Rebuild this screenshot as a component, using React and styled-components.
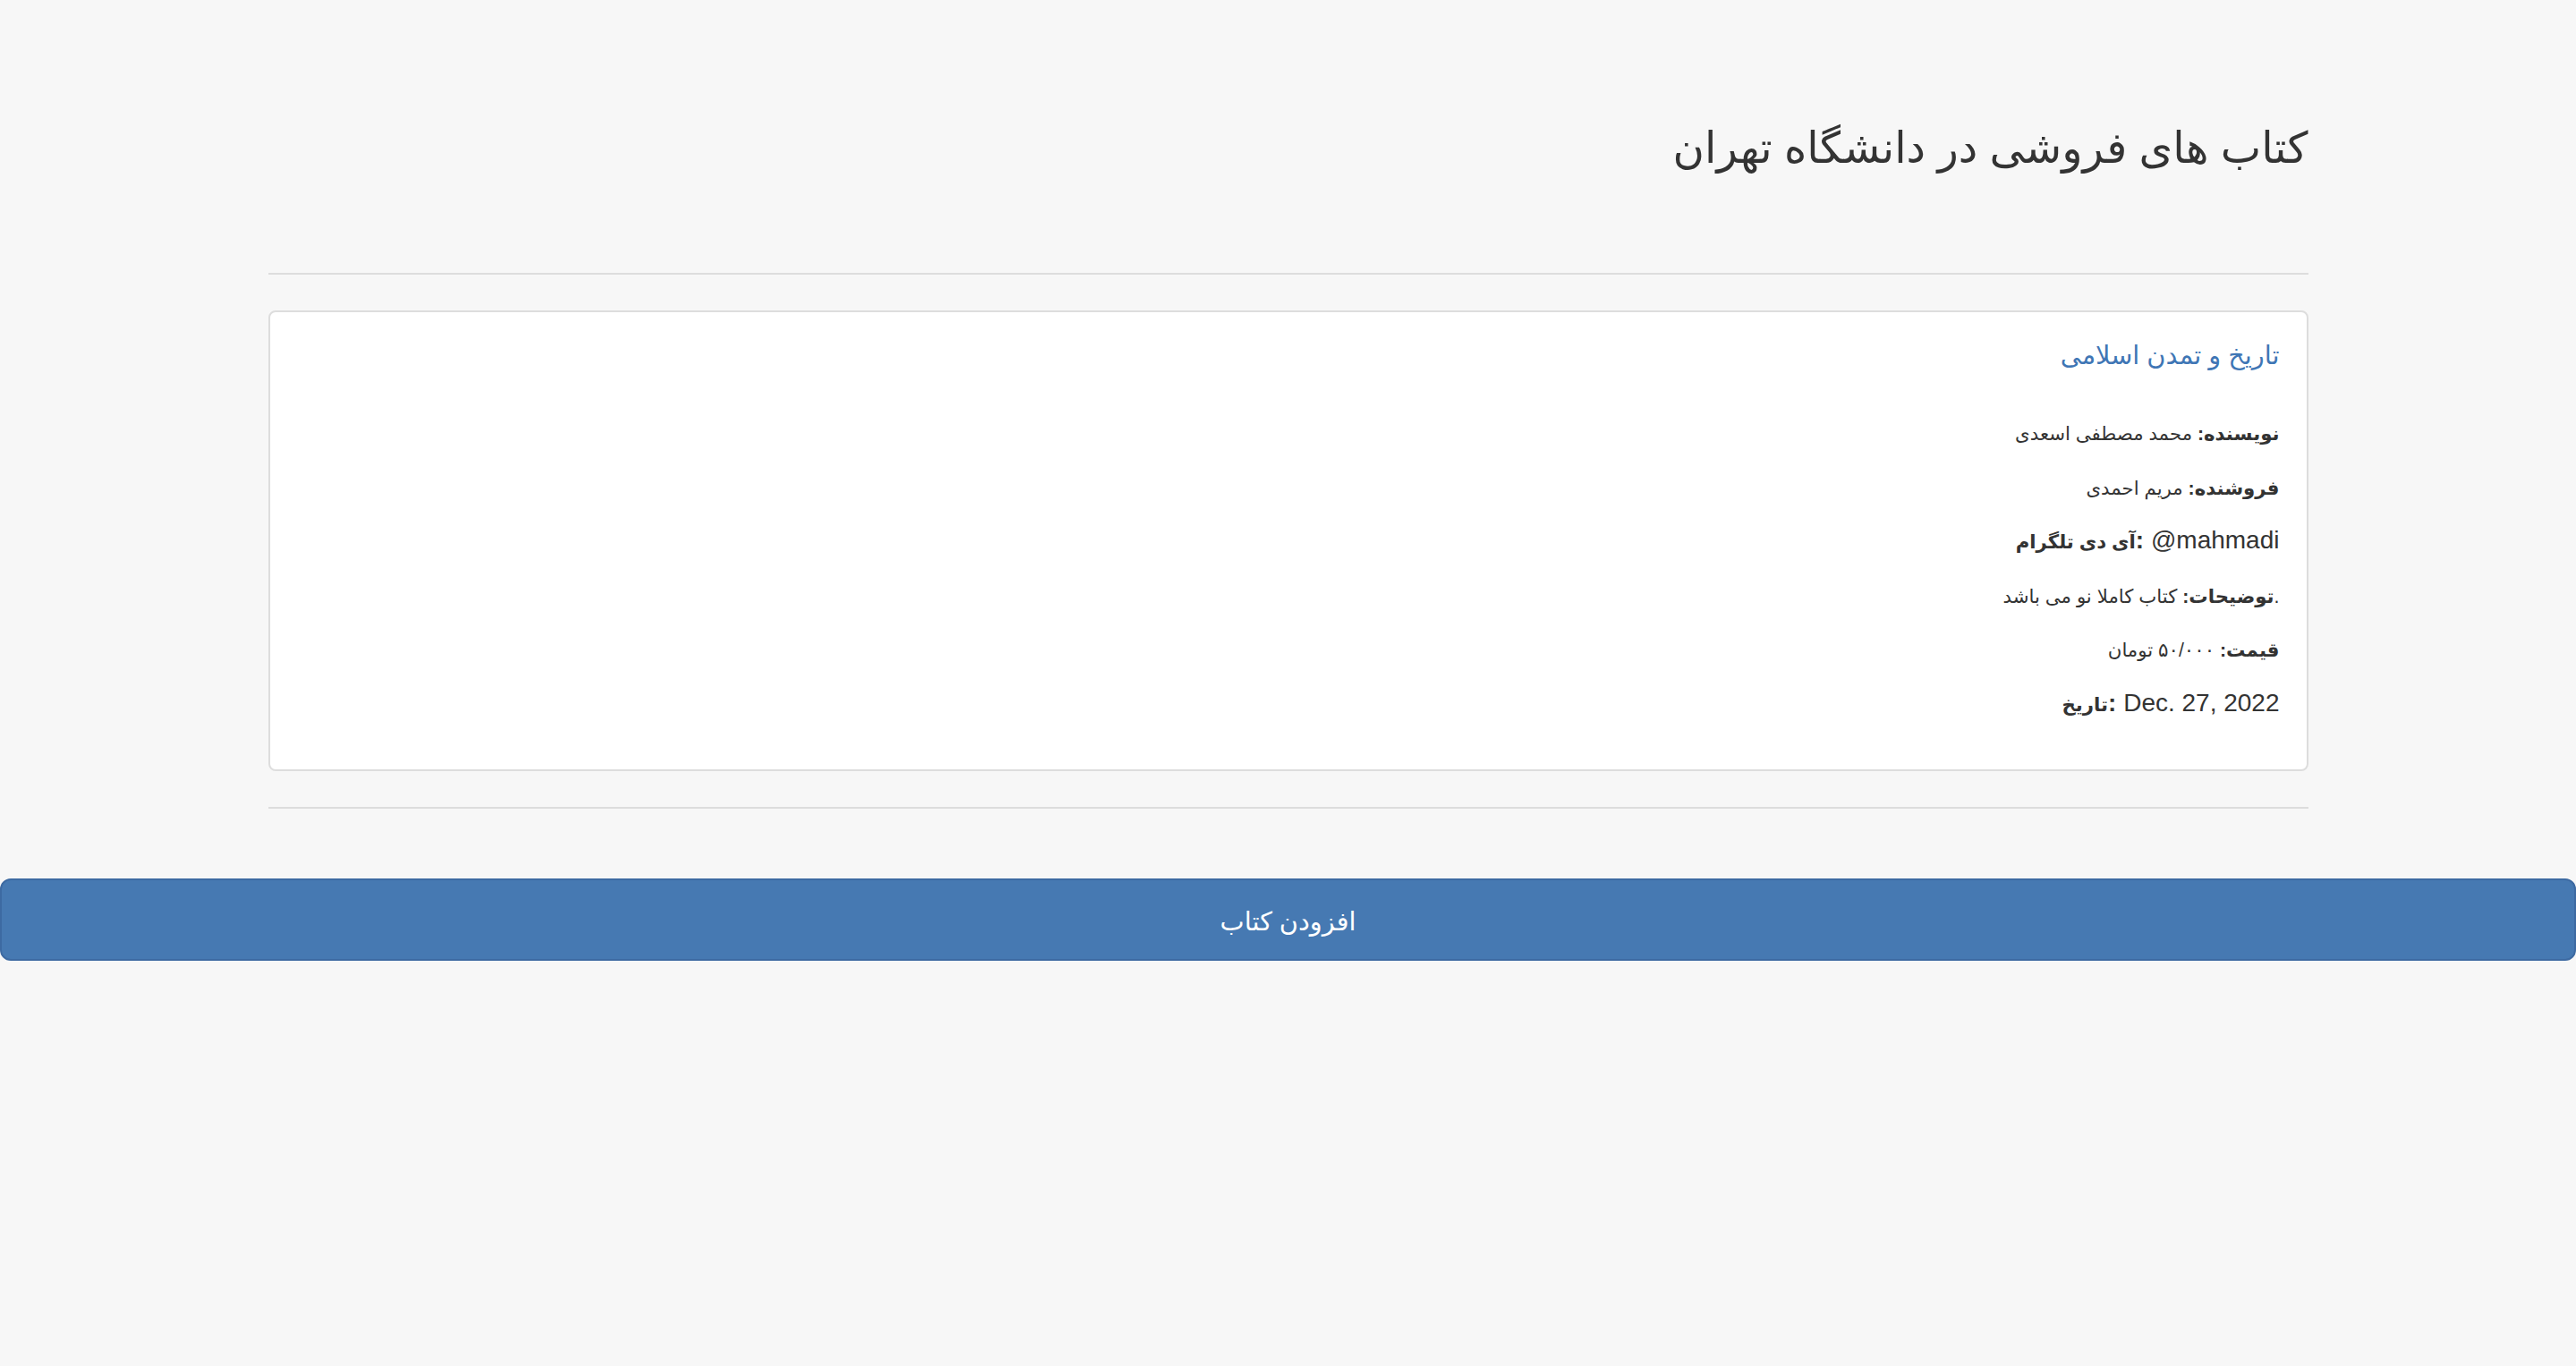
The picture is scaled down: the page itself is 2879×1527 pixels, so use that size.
import React from "react";
import styled, { createGlobalStyle } from "styled-components";

const GlobalStyle = createGlobalStyle`
  html, body {
    margin: 0;
    padding: 0;
    background-color: #f7f7f7;
  }
  body {
    font-family: "Liberation Sans", Arial, "DejaVu Sans", sans-serif;
    color: #333333;
    font-size: 28px;
    line-height: 1.42857;
  }
  * {
    box-sizing: border-box;
  }
`;

const Page = styled.div`
  width: 100%;
  padding-top: 118px;
  padding-bottom: 200px;
`;

const Container = styled.div`
  width: 2280px;
  margin: 0 auto;
`;

// Persian runs: the fallback Arabic face is larger than the original's,
// so they are set a little smaller than the surrounding Latin text
const Fa = styled.span`
  font-size: ${(p) => p.$scale || 0.76}em;
  line-height: 1;
`;

const Title = styled.h1`
  margin: 0 0 108px;
  font-size: 72px;
  font-weight: normal;
  line-height: 79px;
  text-align: right;
  color: #333333;
`;

const Rule = styled.hr`
  margin: 0 0 40px;
  border: 0;
  border-top: 2px solid #dddddd;
  height: 0;
`;

const Panel = styled.div`
  background-color: #ffffff;
  border: 2px solid #dddddd;
  border-radius: 8px;
  padding: 26px 30px 34px;
  margin-bottom: 40px;
  text-align: right;
`;

const BookTitle = styled.h4`
  margin: 0 0 48px;
  font-size: 36px;
  font-weight: normal;
  line-height: 40px;
  color: #3f76b5;
`;

const Row = styled.p`
  margin: 0 0 20px;
  font-size: 28px;
  line-height: 40.5px;
  direction: ltr;
  text-align: right;
`;

const Label = styled.b`
  font-weight: bold;
`;

const AddButton = styled.button`
  display: block;
  width: 100%;
  margin-top: 78px;
  padding: 20px 32px;
  font-family: "Liberation Sans", Arial, "DejaVu Sans", sans-serif;
  font-size: 36px;
  line-height: 48px;
  color: #ffffff;
  background-color: #4679b2;
  border: 2px solid #3d6aa2;
  border-radius: 12px;
  text-align: center;
  cursor: pointer;

  &:hover {
    background-color: #3d6ca3;
  }
`;

const book = {
  title: "تاریخ و تمدن اسلامی",
  author: "محمد مصطفی اسعدی",
  seller: "مریم احمدی",
  telegram: "@mahmadi",
  description: "کتاب کاملا نو می باشد.",
  price: "۵۰/۰۰۰ تومان",
  date: "Dec. 27, 2022",
};

const App = () => {
  return (
    <>
      <GlobalStyle />
      <Page>
        <Container>
          <Title>
            <Fa $scale={0.67}>کتاب های فروشی در دانشگاه تهران</Fa>
          </Title>
          <Rule />
          <Panel>
            <BookTitle>
              <Fa $scale={0.8}>{book.title}</Fa>
            </BookTitle>
            <Row>
              <Fa>
                <Label>نویسنده:</Label> {book.author}
              </Fa>
            </Row>
            <Row>
              <Fa>
                <Label>فروشنده:</Label> {book.seller}
              </Fa>
            </Row>
            <Row>
              <Label>
                <Fa>آی دی تلگرام</Fa>:
              </Label>{" "}
              {book.telegram}
            </Row>
            <Row>
              <Fa>
                <Label>توضیحات:</Label> {book.description}
              </Fa>
            </Row>
            <Row>
              <Fa>
                <Label>قیمت:</Label> {book.price}
              </Fa>
            </Row>
            <Row>
              <Label>
                <Fa>تاریخ</Fa>:
              </Label>{" "}
              {book.date}
            </Row>
          </Panel>
          <Rule />
        </Container>
        <AddButton>
          <Fa $scale={0.8}>افزودن کتاب</Fa>
        </AddButton>
      </Page>
    </>
  );
};

export default App;
